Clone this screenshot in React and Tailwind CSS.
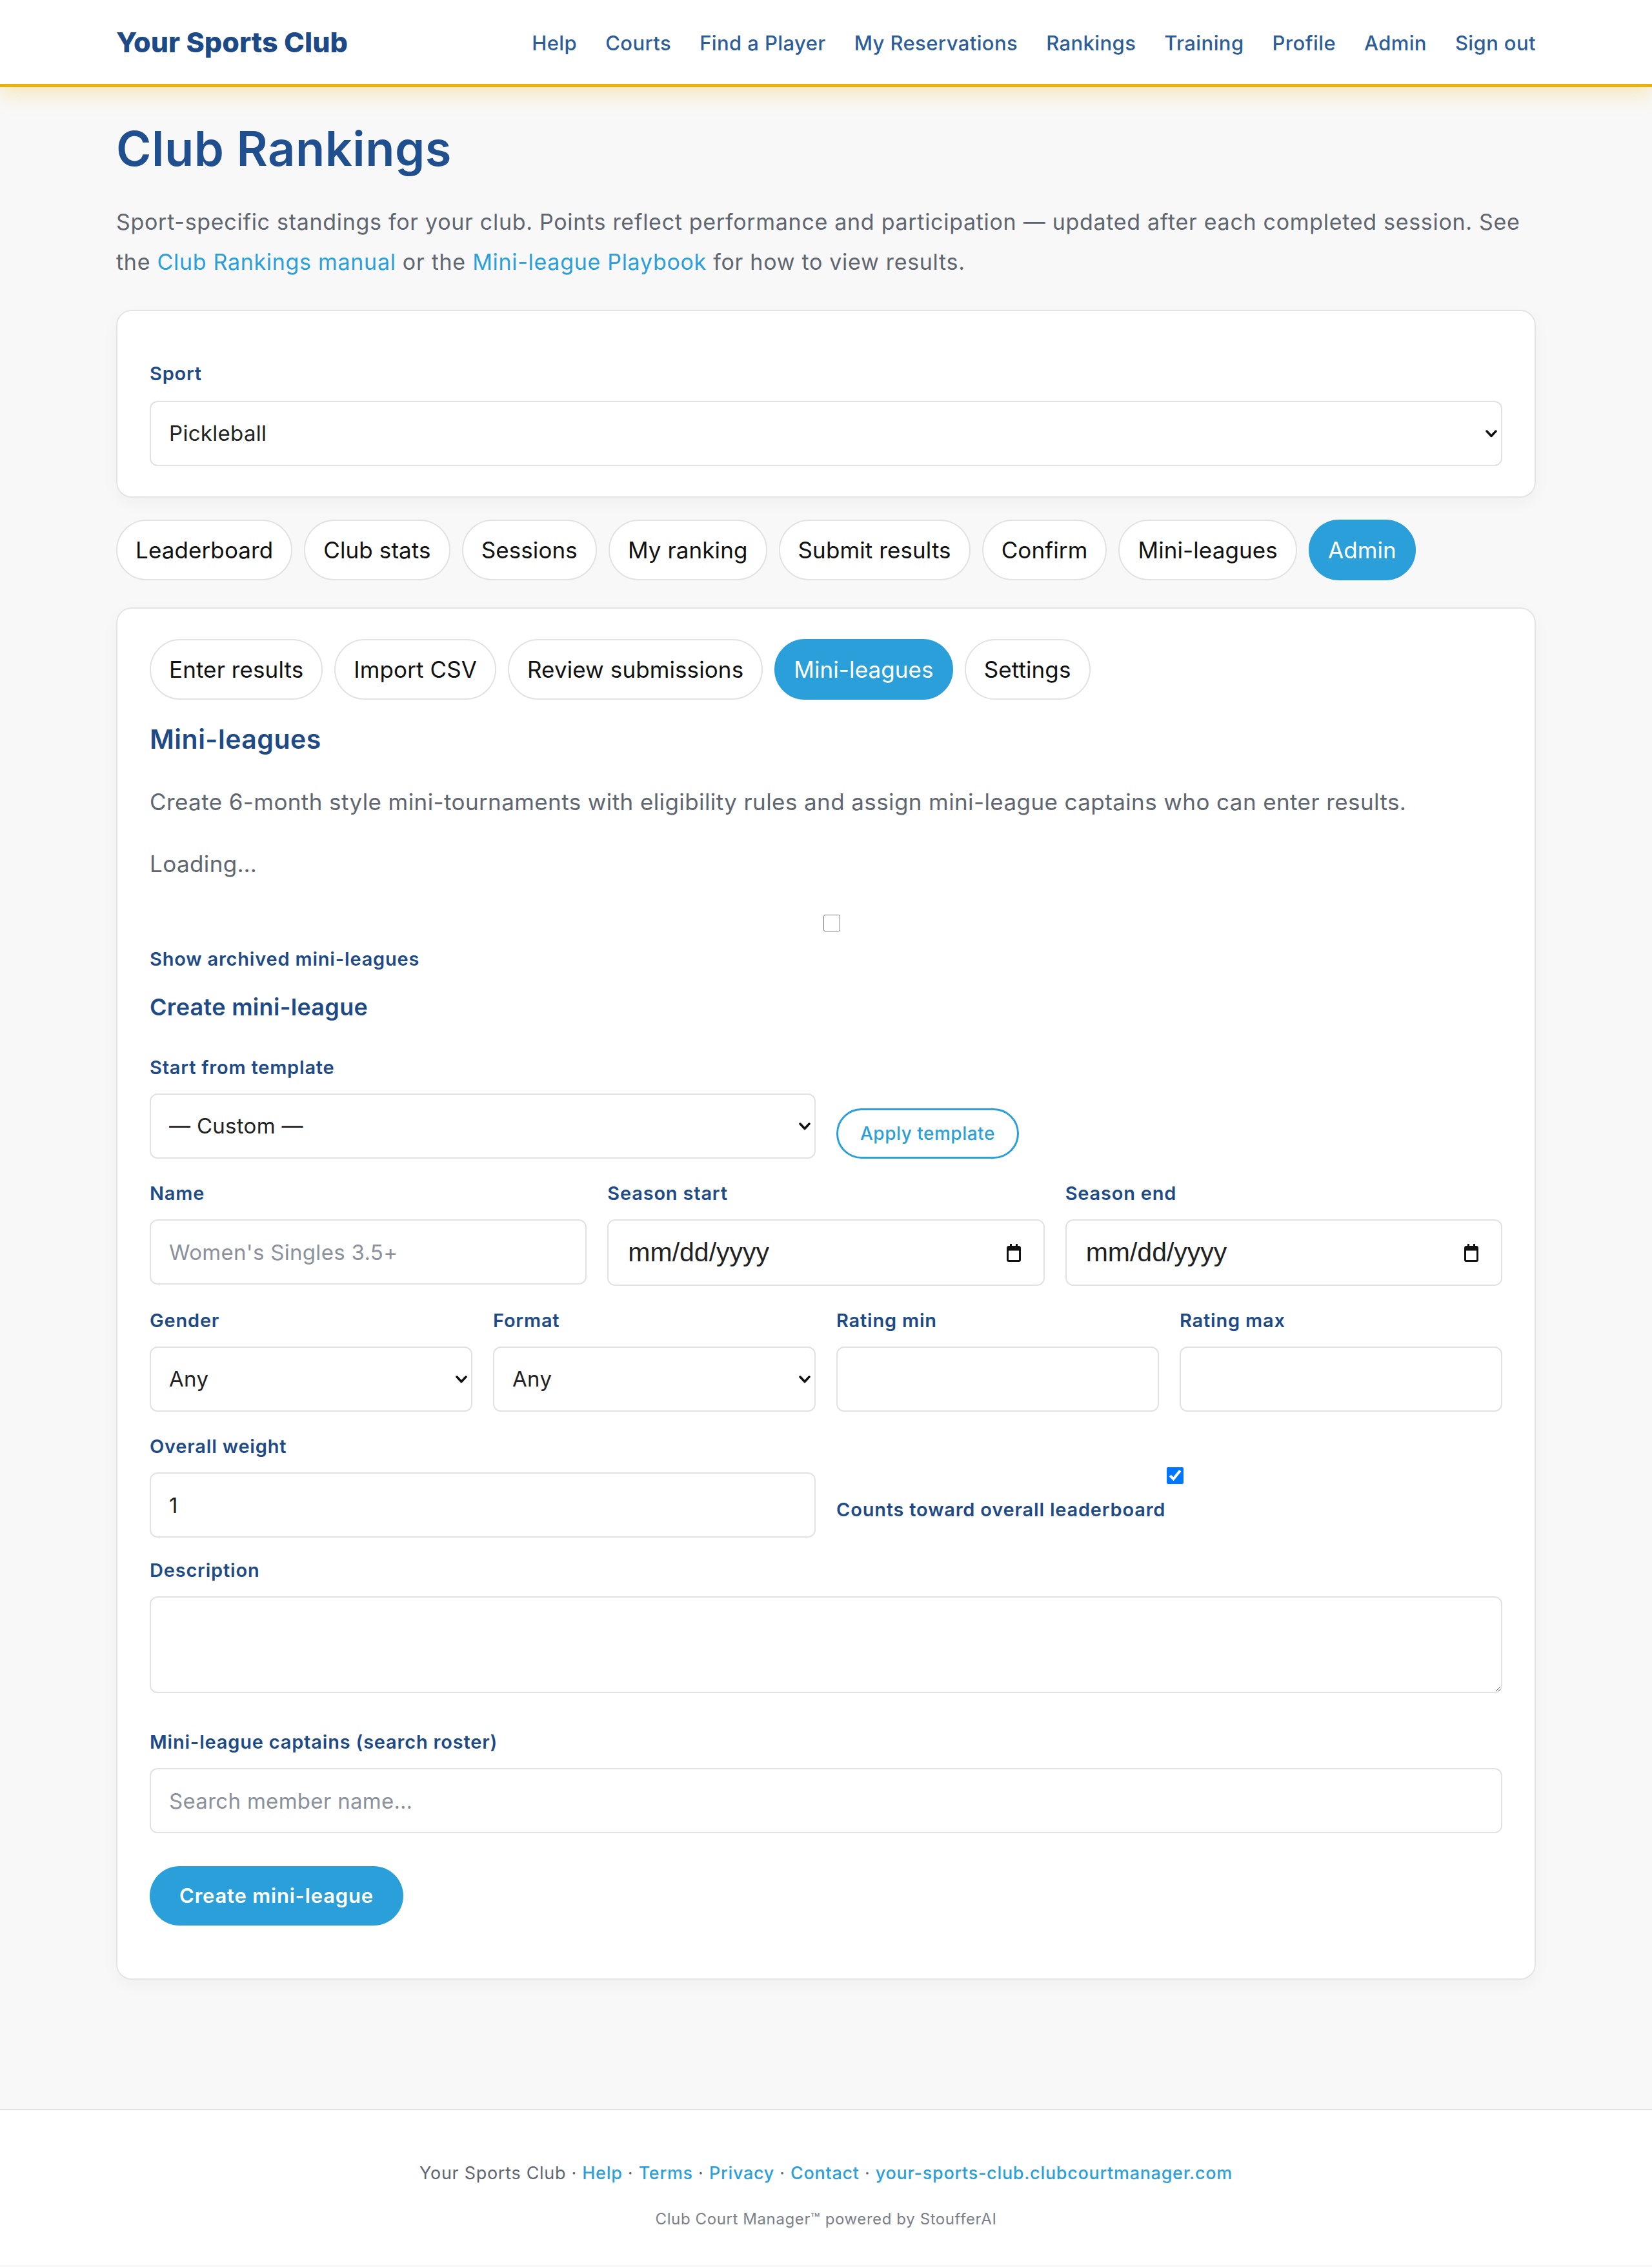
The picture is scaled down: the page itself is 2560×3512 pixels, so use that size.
import React from "react";

const navLinks = ["Help", "Courts", "Find a Player", "My Reservations", "Rankings", "Training", "Profile", "Admin", "Sign out"];
const mainTabs = ["Leaderboard", "Club stats", "Sessions", "My ranking", "Submit results", "Confirm", "Mini-leagues", "Admin"];
const adminTabs = ["Enter results", "Import CSV", "Review submissions", "Mini-leagues", "Settings"];

const inputCls =
  "h-[101px] w-full rounded-[12px] border-2 border-[#e2e2e2] bg-white px-[28px] text-[33px] tracking-[0.3px] text-[#222] placeholder:text-[#8a919b] outline-none";

function Pill({ label, active }) {
  return (
    <button
      className={
        "flex h-[94px] items-center rounded-full border-2 px-[28px] text-[35px] tracking-[0.1px] " +
        (active ? "border-[#2b9fd9] bg-[#2b9fd9] text-white" : "border-[#e2e2e2] bg-white text-[#111]")
      }
    >
      {label}
    </button>
  );
}

function FieldLabel({ children }) {
  return <label className="text-[29px] font-semibold leading-[40px] tracking-[0.8px] text-[#1e4a86]">{children}</label>;
}

function Field({ label, children }) {
  return (
    <div className="flex flex-col gap-[20px]">
      <FieldLabel>{label}</FieldLabel>
      {children}
    </div>
  );
}

function Chevron() {
  return (
    <svg className="pointer-events-none absolute right-[8px] top-1/2 -translate-y-1/2" width="18" height="12" viewBox="0 0 18 12">
      <path d="M2 2 L9 9.5 L16 2" fill="none" stroke="#111" strokeWidth="3.5" strokeLinecap="round" strokeLinejoin="round" />
    </svg>
  );
}

function Select({ value, options }) {
  return (
    <div className="relative">
      <select defaultValue={value} className={inputCls + " appearance-none pr-[60px]"}>
        {options.map((o) => (
          <option key={o}>{o}</option>
        ))}
      </select>
      <Chevron />
    </div>
  );
}

function DateInput() {
  return (
    <div className="relative">
      <input
        type="text"
        readOnly
        value="mm/dd/yyyy"
        className={inputCls + " h-[103px] px-[30px] font-['Liberation_Sans',sans-serif] text-[41px] tracking-normal"}
      />
      <svg className="pointer-events-none absolute right-[36px] top-1/2 -translate-y-1/2" width="24" height="28" viewBox="0 0 24 28">
        <rect x="6" y="0" width="3" height="5" fill="#111" />
        <rect x="15" y="0" width="3" height="5" fill="#111" />
        <rect x="2.5" y="4.5" width="19" height="22" rx="2" fill="none" stroke="#111" strokeWidth="3" />
        <rect x="2.5" y="4.5" width="19" height="6" fill="#111" />
      </svg>
    </div>
  );
}

function Checkbox({ checked }) {
  return (
    <div className="flex justify-center pl-[17px]">
      <input type="checkbox" defaultChecked={checked} className="h-[26px] w-[26px]" />
    </div>
  );
}

export default function App() {
  return (
    <div className="min-h-screen bg-[#f8f8f8] font-['Inter','Noto_Sans',sans-serif]">
      <header className="relative z-10 border-b-[5px] border-[#e8b00c] bg-white shadow-[0_12px_28px_rgba(240,190,40,0.28)]">
        <div className="mx-auto flex h-[130px] max-w-[2200px] items-center justify-between">
          <div className="text-[43px] font-extrabold text-[#1c4a87]">Your Sports Club</div>
          <nav className="flex items-center gap-[44px] pt-[4px] text-[31px] font-medium tracking-[0.4px] text-[#2c5d99]">
            {navLinks.map((l) => (
              <a key={l} href="#">
                {l}
              </a>
            ))}
          </nav>
        </div>
      </header>

      <main className="mx-auto max-w-[2200px] pb-[200px] pt-[52px]">
        <h1 className="text-[74px] font-semibold leading-[86px] tracking-[0.5px] text-[#1f4f8f]">Club Rankings</h1>
        <p className="mt-[40px] text-[34px] leading-[62px] tracking-[0.7px] text-[#5f6670]">
          Sport-specific standings for your club. Points reflect performance and participation — updated after each completed session. See
          the <a href="#" className="text-[#2b9fd9]">Club Rankings manual</a> or the{" "}
          <a href="#" className="text-[#2b9fd9]">Mini-league Playbook</a> for how to view results.
        </p>

        <section className="mt-[43px] rounded-[24px] border-2 border-[#e4e4e4] bg-white px-[50px] pb-[47px] pt-[77px] shadow-[0_8px_24px_rgba(0,0,0,0.04)]">
          <div className="flex flex-col gap-[22px]">
            <FieldLabel>Sport</FieldLabel>
            <Select value="Pickleball" options={["Pickleball", "Tennis", "Padel"]} />
          </div>
        </section>

        <div className="mt-[34px] flex flex-wrap gap-[18px]">
          {mainTabs.map((t) => (
            <Pill key={t} label={t} active={t === "Admin"} />
          ))}
        </div>

        <section className="mt-[42px] rounded-[24px] border-2 border-[#e4e4e4] bg-white px-[50px] pb-[82px] pt-[47px] shadow-[0_8px_24px_rgba(0,0,0,0.04)]">
          <div className="flex flex-wrap gap-[18px]">
            {adminTabs.map((t) => (
              <Pill key={t} label={t} active={t === "Mini-leagues"} />
            ))}
          </div>

          <h2 className="mt-[37px] text-[41px] font-semibold leading-[48px] tracking-[0.5px] text-[#1e4a86]">Mini-leagues</h2>
          <p className="mt-[49px] text-[35px] leading-[48px] tracking-[0.4px] text-[#5f6670]">
            Create 6-month style mini-tournaments with eligibility rules and assign mini-league captains who can enter results.
          </p>
          <p className="mt-[48px] text-[35px] leading-[48px] tracking-[0.4px] text-[#5f6670]">Loading…</p>

          <div className="mt-[55px]">
            <Checkbox />
          </div>
          <div className="mt-[23px]">
            <FieldLabel>Show archived mini-leagues</FieldLabel>
          </div>

          <h3 className="mt-[32px] text-[36px] font-semibold leading-[44px] tracking-[0.3px] text-[#1e4a86]">Create mini-league</h3>

          <div className="mt-[52px] grid grid-cols-2 items-end gap-[32px]">
            <Field label="Start from template">
              <Select value="— Custom —" options={["— Custom —"]} />
            </Field>
            <div>
              <button className="h-[78px] rounded-full border-[3px] border-[#2b9fd9] bg-white px-[34px] text-[28px] font-medium tracking-[0.5px] text-[#2b9fd9]">
                Apply template
              </button>
            </div>
          </div>

          <div className="mt-[34px] grid grid-cols-3 gap-[32px]">
            <Field label="Name">
              <input className={inputCls} placeholder="Women's Singles 3.5+" />
            </Field>
            <Field label="Season start">
              <DateInput />
            </Field>
            <Field label="Season end">
              <DateInput />
            </Field>
          </div>

          <div className="mt-[34px] grid grid-cols-4 gap-[32px]">
            <Field label="Gender">
              <Select value="Any" options={["Any", "Men", "Women", "Mixed"]} />
            </Field>
            <Field label="Format">
              <Select value="Any" options={["Any", "Singles", "Doubles"]} />
            </Field>
            <Field label="Rating min">
              <input className={inputCls} />
            </Field>
            <Field label="Rating max">
              <input className={inputCls} />
            </Field>
          </div>

          <div className="mt-[34px] grid grid-cols-2 gap-[32px]">
            <Field label="Overall weight">
              <input className={inputCls} defaultValue="1" />
            </Field>
            <div className="flex flex-col justify-end gap-[20px] pb-[23px]">
              <Checkbox checked />
              <FieldLabel>Counts toward overall leaderboard</FieldLabel>
            </div>
          </div>

          <div className="mt-[31px]">
            <Field label="Description">
              <textarea className="h-[150px] w-full rounded-[12px] border-2 border-[#e2e2e2] bg-white px-[28px] py-[20px] text-[33px] outline-none" />
            </Field>
          </div>

          <div className="mt-[56px]">
            <Field label="Mini-league captains (search roster)">
              <input className={inputCls} placeholder="Search member name…" />
            </Field>
          </div>

          <button className="mt-[51px] h-[92px] rounded-full bg-[#2b9fd9] px-[46px] text-[31px] font-semibold tracking-[0.8px] text-white">
            Create mini-league
          </button>
        </section>
      </main>

      <footer className="border-t-2 border-[#e2e2e2] bg-white pb-[56px] pt-[80px] text-center">
        <p className="text-[27px] leading-[36px] tracking-[0.7px] text-[#5f6670]">
          Your Sports Club ·{" "}
          <a href="#" className="font-medium text-[#2b9fd9]">Help</a> ·{" "}
          <a href="#" className="font-medium text-[#2b9fd9]">Terms</a> ·{" "}
          <a href="#" className="font-medium text-[#2b9fd9]">Privacy</a> ·{" "}
          <a href="#" className="font-medium text-[#2b9fd9]">Contact</a> ·{" "}
          <a href="#" className="font-medium text-[#2b9fd9]">your-sports-club.clubcourtmanager.com</a>
        </p>
        <p className="mt-[38px] text-[24px] leading-[30px] tracking-[0.6px] text-[#7b8089]">Club Court Manager™ powered by StoufferAI</p>
      </footer>
    </div>
  );
}
